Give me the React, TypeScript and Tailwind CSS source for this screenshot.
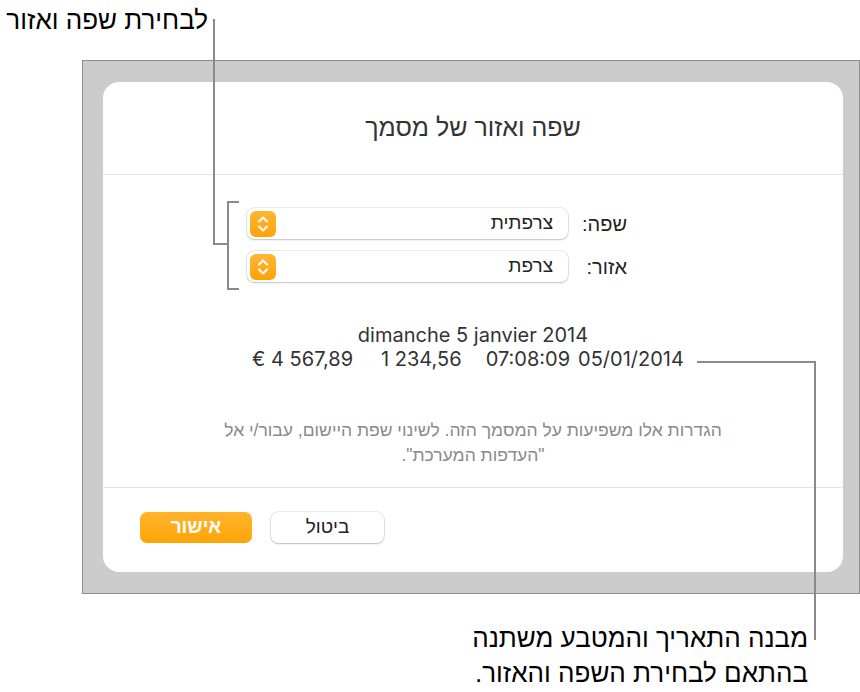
import React from "react";

function Stepper() {
  return (
    <div className="w-[26px] h-[26px] rounded-[6px] bg-gradient-to-b from-[#ffb730] to-[#ffa200] flex items-center justify-center">
      <svg width="14" height="20" viewBox="0 0 14 20" fill="none">
        <path d="M3 7.5 L7 3.5 L11 7.5" stroke="white" strokeWidth="2" strokeLinecap="round" strokeLinejoin="round" />
        <path d="M3 12.5 L7 16.5 L11 12.5" stroke="white" strokeWidth="2" strokeLinecap="round" strokeLinejoin="round" />
      </svg>
    </div>
  );
}

function Popup({ value }: { value: string }) {
  return (
    <div className="w-[321px] h-[31px] rounded-[7px] bg-white shadow-[0_0_0_0.5px_rgba(0,0,0,0.15),0_1px_2px_rgba(0,0,0,0.18)] flex items-center justify-between pr-[15px] pl-[3px]">
      <span className="text-[19px] text-[#222]">{value}</span>
      <Stepper />
    </div>
  );
}

export default function App() {
  return (
    <div className="relative w-[860px] h-[692px] bg-white overflow-hidden pt-[60px] pl-[82px] font-['Liberation_Sans','DejaVu_Sans',sans-serif]">
      {/* frame */}
      <div className="w-[778px] h-[534px] border border-[#8c8c8c] bg-[#cccccc] pt-[21px] pl-[20px]">
        <div dir="rtl" className="w-[740px] h-[490px] rounded-[16px] bg-white flex flex-col">
          <div className="h-[93px] shrink-0 flex items-center justify-center border-b border-[#e4e4e4] text-[25px] text-[#333]">
            שפה ואזור של מסמך
          </div>
          <div className="h-[312px] shrink-0 pt-[33px] flex flex-col">
            <div className="flex items-center h-[31px] pr-[216px]">
              <div className="w-[59px] text-[20px] text-[#222]">שפה:</div>
              <Popup value="צרפתית" />
            </div>
            <div className="flex items-center h-[31px] pr-[216px] mt-[12px]">
              <div className="w-[59px] text-[20px] text-[#222]">אזור:</div>
              <Popup value="צרפת" />
            </div>
            <div dir="ltr" className="mt-[41px] text-center text-[20px] leading-[24px] text-[#333] font-['Inter',sans-serif]">
              <div>dimanche 5 janvier 2014</div>
              <div className="flex justify-center pr-[10px]">
                <span>€ 4 567,89</span>
                <span className="ml-[28px]">1 234,56</span>
                <span className="ml-[24px]">07:08:09</span>
                <span className="ml-[8px]">05/01/2014</span>
              </div>
            </div>
            <div className="mt-[47px] text-center text-[17.5px] leading-[25px] text-[#8a8a8a]">
              <div>הגדרות אלו משפיעות על המסמך הזה. לשינוי שפת היישום, עבור/י אל</div>
              <div>"העדפות המערכת".</div>
            </div>
          </div>
          <div className="flex-1 border-t border-[#e4e4e4] pt-[24px] pl-[37px] flex justify-end gap-[19px]">
            <button className="w-[113px] h-[31px] rounded-[7px] bg-white shadow-[0_0_0_0.5px_rgba(0,0,0,0.15),0_1px_2px_rgba(0,0,0,0.2)] text-[19px] text-[#222]">
              ביטול
            </button>
            <button className="w-[112px] h-[31px] rounded-[7px] bg-gradient-to-b from-[#ffb42a] to-[#ffa400] text-[19px] font-bold text-white">
              אישור
            </button>
          </div>
        </div>
      </div>

      {/* top callout */}
      <div dir="rtl" className="absolute right-[652px] top-[2px] text-[26px] leading-[36px] text-black whitespace-nowrap">
        לבחירת שפה ואזור
      </div>
      <div className="absolute left-[213px] top-[19px] w-[2px] h-[226px] bg-[#8a8a8a]" />
      <div className="absolute left-[213px] top-[243px] w-[16px] h-[2px] bg-[#8a8a8a]" />
      {/* bracket */}
      <div className="absolute left-[227px] top-[201px] w-[2px] h-[89px] bg-[#8a8a8a]" />
      <div className="absolute left-[227px] top-[201px] w-[12px] h-[2px] bg-[#8a8a8a]" />
      <div className="absolute left-[227px] top-[288px] w-[12px] h-[2px] bg-[#8a8a8a]" />

      {/* bottom callout */}
      <div className="absolute left-[697px] top-[361px] w-[119px] h-[2px] bg-[#8a8a8a]" />
      <div className="absolute left-[814px] top-[361px] w-[2px] h-[279px] bg-[#8a8a8a]" />
      <div dir="rtl" className="absolute right-[52px] top-[621px] text-[26px] leading-[35px] text-black text-right whitespace-nowrap">
        <div>מבנה התאריך והמטבע משתנה</div>
        <div>בהתאם לבחירת השפה והאזור.</div>
      </div>
    </div>
  );
}
